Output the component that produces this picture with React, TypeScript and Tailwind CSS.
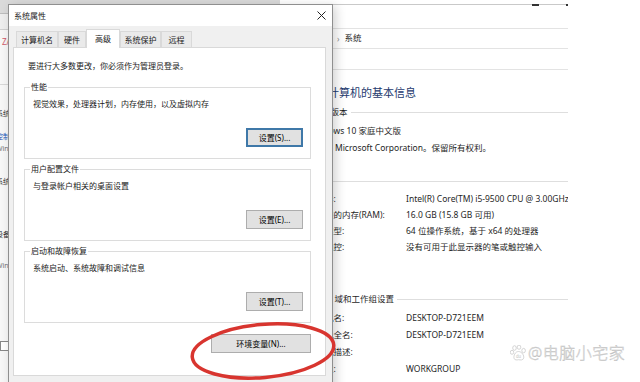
const navItems = [
  { text: "系统和安全", mt: "mt-[24px]", color: "text-[#333]" },
  { text: "控制面板主页", mt: "mt-[12px]", color: "text-[#1a57b8]" },
  { text: "Windows 设置", mt: "mt-[2px]", color: "text-[#777]" },
  { text: "系统信息", mt: "mt-[22px]", color: "text-[#333]" },
  { text: "设备管理器", mt: "mt-[43px]", color: "text-[#333]" },
  { text: "Windows 更新", mt: "mt-[20px]", color: "text-[#777]" },
];

function InfoRow({ label, value, h }: { label: string; value: string; h: string }) {
  return (
    <div className={`flex items-center whitespace-nowrap pl-[28px] ${h}`}>
      <div className="w-[98px] shrink-0">{label}</div>
      <div>{value}</div>
    </div>
  );
}

function SectionHead({ title, mt }: { title: string; mt: string }) {
  return (
    <div className={`flex items-center gap-[3px] pl-[12px] h-[12px] whitespace-nowrap ${mt}`}>
      <span>{title}</span>
      <div className="flex-1 h-px bg-[#dedede]" />
    </div>
  );
}

function SystemWindow() {
  return (
    <div className="absolute left-[-14px] top-0 w-[582px] h-full flex overflow-hidden text-[8.5px] text-[#1f1f1f]">
      <div className="w-[294px] shrink-0 flex flex-col bg-[#f7f7f7] text-[7px] whitespace-nowrap overflow-hidden">
        <div className="h-[14px] bg-[#dadada] border-b border-[#bdbdbd]" />
        <div className="h-[16px] border-b border-[#d0d0d0] bg-[#eeeeee]" />
        <div className="pl-[16px] mt-[6px] text-[#d05a6a] text-[8px]">Z/</div>
        <div className="mt-[36px] h-px bg-[#d8d8d8]" />
        {navItems.map((n) => (
          <div key={n.text} className={`pl-[10px] ${n.mt} ${n.color}`}>
            {n.text}
          </div>
        ))}
        <div className="mt-[70px] ml-[14px] w-[10px] h-[10px] border border-[#888] bg-white" />
      </div>

      <div className="w-[288px] shrink-0 overflow-hidden flex flex-col pt-[4px] bg-white">
        <div className="relative h-[25px] border-t border-b border-[#c9c9c9] border-b-[#e3e3e3]">
          <div className="absolute left-[252px] top-[-1px] w-[7px] h-[2px] bg-[#333]" />
          <div className="absolute right-0 top-[-1px] w-[2px] h-[2px] bg-[#333]" />
        </div>
        <div className="h-[20px] border-b border-[#e3e3e3] flex items-center pl-[57px] gap-[5px]">
          <span className="text-[#888] text-[8px]">›</span>
          <span>系统</span>
        </div>
        <div className="h-[21px] border-b border-[#e3e3e3]" />

        <div className="mt-[16px] pl-[4px] text-[11px] leading-[14px] text-[#1e3a6e] whitespace-nowrap">
          查看有关计算机的基本信息
        </div>
        <SectionHead title="Windows 版本" mt="mt-[6px]" />
        <div className="mt-[7px] pl-[28px] h-[12px] leading-[12px] whitespace-nowrap">Windows 10 家庭中文版</div>
        <div className="mt-[5px] pl-[24px] h-[12px] leading-[12px] whitespace-nowrap">
          © 2019 Microsoft Corporation。保留所有权利。
        </div>

        <SectionHead title="系统" mt="mt-[21px]" />
        <div className="mt-[4px]">
          <InfoRow h="h-[16px]" label="处理器:" value="Intel(R) Core(TM) i5-9500 CPU @ 3.00GHz   3.00 GHz" />
          <InfoRow h="h-[16px]" label="已安装的内存(RAM):" value="16.0 GB (15.8 GB 可用)" />
          <InfoRow h="h-[16px]" label="系统类型:" value="64 位操作系统，基于 x64 的处理器" />
          <InfoRow h="h-[16px]" label="笔和触控:" value="没有可用于此显示器的笔或触控输入" />
        </div>

        <SectionHead title="计算机名、域和工作组设置" mt="mt-[38px]" />
        <div className="mt-[5px]">
          <InfoRow h="h-[17px]" label="计算机名:" value="DESKTOP-D721EEM" />
          <InfoRow h="h-[17px]" label="计算机全名:" value="DESKTOP-D721EEM" />
          <InfoRow h="h-[17px]" label="计算机描述:" value="" />
          <InfoRow h="h-[17px]" label="工作组:" value="WORKGROUP" />
        </div>
      </div>
    </div>
  );
}

const tabs = [
  { label: "计算机名", w: "w-[42px]" },
  { label: "硬件", w: "w-[28px]" },
  { label: "高级", w: "w-[34px]", active: true },
  { label: "系统保护", w: "w-[41px]" },
  { label: "远程", w: "w-[31px]" },
];

function WinButton({ label, w, focused }: { label: string; w: string; focused?: boolean }) {
  return (
    <div
      className={`self-end h-[19px] ${w} flex items-center justify-center bg-[#e1e1e1] text-[8px] text-black ${
        focused ? "border-2 border-[#3f78a8]" : "border border-[#adadad]"
      }`}
    >
      {label}
    </div>
  );
}

function Group({ title, desc, button, mt, focused }: { title: string; desc: string; button: string; mt: string; focused?: boolean }) {
  return (
    <fieldset className={`border border-[#dcdcdc] ${mt}`}>
      <legend className="ml-[5px] px-[1px] text-[8px] leading-[12px] text-[#1a1a1a]">{title}</legend>
      <div className="flex flex-col pb-[11px] pr-[7px]">
        <div className="mt-[5px] ml-[8px] text-[8px] leading-[12px] text-[#1a1a1a]">{desc}</div>
        <div className="mt-[18px] self-end">
          <WinButton label={button} w="w-[57px]" focused={focused} />
        </div>
      </div>
    </fieldset>
  );
}

function PropertiesDialog() {
  return (
    <div className="absolute left-[8px] top-[4px] w-[325px] h-[392px] flex flex-col border border-[#8f8f8f] bg-[#f0f0f0] shadow-[3px_2px_10px_rgba(0,0,0,0.18)] text-[8px] text-[#1a1a1a]">
      <div className="h-[21px] bg-white flex items-center justify-between pl-[5px] pr-[6px]">
        <span>系统属性</span>
        <svg width="9" height="9" viewBox="0 0 9 9">
          <path d="M0.5 0.5 L8.5 8.5 M8.5 0.5 L0.5 8.5" stroke="#222" strokeWidth="1" />
        </svg>
      </div>

      <div className="flex flex-col ml-[4px] mr-[6px]">
        <div className="h-[21px] flex items-end pl-[3px]">
          {tabs.map((t) =>
            t.active ? (
              <div
                key={t.label}
                className={`${t.w} h-[19px] mb-[-1px] relative z-10 bg-white border border-b-0 border-[#d9d9d9] flex items-center justify-center pb-[1px]`}
              >
                {t.label}
              </div>
            ) : (
              <div
                key={t.label}
                className={`${t.w} h-[16px] bg-[#eaeaea] border border-b-0 border-[#d9d9d9] flex items-center justify-center`}
              >
                {t.label}
              </div>
            )
          )}
        </div>

        <div className="h-[329px] bg-white border border-[#d9d9d9] flex flex-col pt-[12px] pl-[10px] pr-[14px]">
          <div className="ml-[4px] leading-[12px]">要进行大多数更改，你必须作为管理员登录。</div>
          <Group mt="mt-[9px]" title="性能" desc="视觉效果，处理器计划，内存使用，以及虚拟内存" button="设置(S)..." focused />
          <Group mt="mt-[4px]" title="用户配置文件" desc="与登录帐户相关的桌面设置" button="设置(E)..." />
          <Group mt="mt-[4px]" title="启动和故障恢复" desc="系统启动、系统故障和调试信息" button="设置(T)..." />
          <div className="mt-[11px] self-end">
            <WinButton label="环境变量(N)..." w="w-[100px]" />
          </div>
        </div>
      </div>
    </div>
  );
}

function Highlight() {
  return (
    <svg className="absolute left-[185px] top-[318px]" width="156" height="68" viewBox="0 0 156 68">
      <ellipse cx="78" cy="33" rx="71" ry="26.5" transform="rotate(-5 78 33)" fill="none" stroke="#d8352f" strokeWidth="3.5" />
    </svg>
  );
}

function Watermark() {
  return (
    <div className="absolute left-[510px] top-[345px] flex items-center gap-[1px]">
      <svg width="17" height="16" viewBox="0 0 17 16" fill="#fff" stroke="#c4c4c4" strokeWidth="0.7">
        <ellipse cx="4.5" cy="3" rx="1.8" ry="2.3" />
        <ellipse cx="9" cy="2.2" rx="1.8" ry="2.1" />
        <ellipse cx="2" cy="7.3" rx="1.7" ry="2" />
        <ellipse cx="13.6" cy="5.6" rx="1.8" ry="2.2" />
        <path d="M8.5 6.5 C5 6.5 3.5 11 4 13.2 C4.6 15.4 7 15 8.5 14.7 C10.5 15 13 15.5 13.7 13 C14.3 10.8 12 6.5 8.5 6.5 Z" />
        <text x="6" y="13.3" fontSize="4.5" fill="#c4c4c4" stroke="none" fontFamily="Liberation Sans, sans-serif">du</text>
      </svg>
      <span className="text-[16px] leading-none tracking-[0.5px] text-white font-light [-webkit-text-stroke:0.5px_#c2c2c2]">@电脑小宅家</span>
    </div>
  );
}

export default function App() {
  return (
    <div className="relative w-[640px] h-[382px] overflow-hidden bg-white font-['Noto_Sans','Noto_Sans_CJK_SC',sans-serif]">
      <SystemWindow />
      <PropertiesDialog />
      <Highlight />
      <Watermark />
    </div>
  );
}
